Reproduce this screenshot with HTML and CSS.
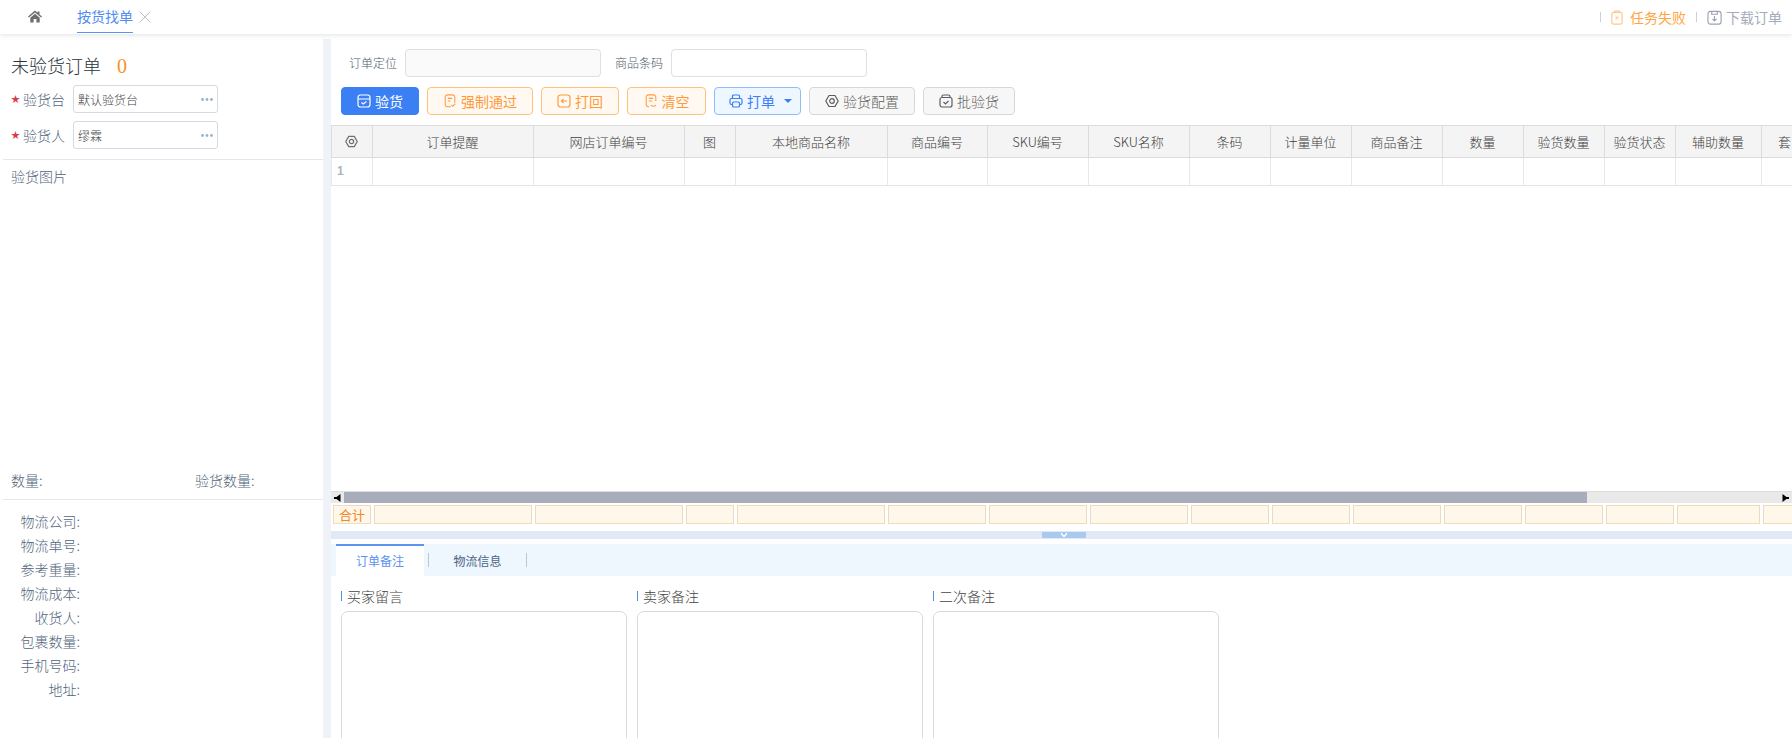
FILE: index.html
```html
<!DOCTYPE html>
<html lang="zh-CN">
<head>
<meta charset="utf-8">
<title>按货找单</title>
<link rel="stylesheet" href="styles.css">
</head>
<body>
<header class="topbar">
  <div class="home"><svg class="home-icon" viewBox="0 0 14 13"><path d="M7 .5 0 6.500l.9 1L7 2.400l6.100 5.100.9-1L11.500 4.400V1.400H9.600v1.400z"/><path d="M2.300 7.700 7 3.800l4.700 3.900v4.800H8.400V9H5.600v3.500H2.300z"/></svg></div>
  <div class="tab-open">
    <span class="tab-title">按货找单</span>
    <svg class="tab-close" viewBox="0 0 12 12"><path d="M.5.5l11 11M11.500.5l-11 11"/></svg>
  </div>
  <div class="top-actions">
    <i class="top-sep"></i>
    <span class="top-action warn">
      <svg class="ic" viewBox="0 0 14 16"><rect x="1.500" y="2.500" width="11" height="12.500" rx="2"/><path d="M4.500 2.500V1h5v1.500M5.500 7l3 3M8.500 7l-3 3"/></svg>
      任务失败
    </span>
    <i class="top-sep"></i>
    <span class="top-action muted">
      <svg class="ic" viewBox="0 0 16 16"><rect x="1" y="1.500" width="14" height="13.500" rx="2.500"/><path d="M5 1.500v3h6v-3M8 6.500v5M5.800 9.500 8 11.700l2.200-2.200"/></svg>
      下载订单
    </span>
  </div>
</header>

<main class="main">
  <aside class="left">
    <section class="left-head">
      <h1 class="left-title">未验货订单<span class="count">0</span></h1>
      <div class="pick-row">
        <span class="star">★</span><label class="pick-label">验货台</label>
        <div class="pick-box"><span>默认验货台</span><svg class="dots" viewBox="0 0 12 3"><circle cx="1.500" cy="1.500" r="1.400"/><circle cx="6" cy="1.500" r="1.400"/><circle cx="10.500" cy="1.500" r="1.400"/></svg></div>
      </div>
      <div class="pick-row">
        <span class="star">★</span><label class="pick-label">验货人</label>
        <div class="pick-box"><span>缪霖</span><svg class="dots" viewBox="0 0 12 3"><circle cx="1.500" cy="1.500" r="1.400"/><circle cx="6" cy="1.500" r="1.400"/><circle cx="10.500" cy="1.500" r="1.400"/></svg></div>
      </div>
    </section>
    <section class="left-pic">
      <div class="pic-title">验货图片</div>
      <div class="stats">
        <span class="stat-a">数量:</span>
        <span>验货数量:</span>
      </div>
    </section>
    <section class="left-info">
      <div class="info-row">物流公司:</div>
      <div class="info-row">物流单号:</div>
      <div class="info-row">参考重量:</div>
      <div class="info-row">物流成本:</div>
      <div class="info-row">收货人:</div>
      <div class="info-row">包裹数量:</div>
      <div class="info-row">手机号码:</div>
      <div class="info-row">地址:</div>
    </section>
  </aside>
  <div class="gutter"></div>
  <div class="right">
    <div class="filters">
      <label class="f-label">订单定位</label><div class="f-input disabled"></div>
      <label class="f-label second">商品条码</label><div class="f-input"></div>
    </div>
    <div class="buttons">
      <button class="btn primary w78"><svg class="ic" viewBox="0 0 14 14"><rect x="1" y="1" width="12" height="12" rx="2.500"/><path d="M1 5h12M4.500 8.500l1.700 1.500 3.300-2.500"/></svg>验货</button>
      <button class="btn orange w106"><svg class="ic" viewBox="0 0 14 16"><path d="M8 14.500H4A2.500 2.500 0 0 1 1.500 12V3.500A2.500 2.500 0 0 1 4 1h6a2.500 2.500 0 0 1 2.500 2.500V10M4.500 5h5M4.500 8h3M8.500 12.500l1.500 1.500 3-3"/></svg>强制通过</button>
      <button class="btn orange w78"><svg class="ic" viewBox="0 0 14 14"><rect x="1" y="1" width="12" height="12" rx="2.500"/><path d="M10 7H4.500M6.500 5 4.500 7l2 2"/></svg>打回</button>
      <button class="btn orange w79"><svg class="ic" viewBox="0 0 14 16"><path d="M5 14.500H4A2.500 2.500 0 0 1 1.500 12V3.500A2.500 2.500 0 0 1 4 1h6a2.500 2.500 0 0 1 2.500 2.500V8M4.500 5h5M4.500 8h4M7 12.500a3 2.500 0 0 0 5.500 0"/></svg>清空</button>
      <button class="btn blue w87"><svg class="ic" viewBox="0 0 14 14"><path d="M3.500 4.500V2A1 1 0 0 1 4.500 1h5a1 1 0 0 1 1 1v2.500M3.500 10.500H2.500A1.500 1.500 0 0 1 1 9V6a1.500 1.500 0 0 1 1.500-1.500h9A1.500 1.500 0 0 1 13 6v3a1.500 1.500 0 0 1-1.500 1.500h-1"/><rect x="3.500" y="8" width="7" height="5" rx="1"/></svg>打单<i class="caret"></i></button>
      <button class="btn gray w106"><svg class="ic" viewBox="0 0 14 14"><path d="M4 1.500h6L13.200 7 10 12.500H4L.8 7z" stroke-linejoin="round"/><circle cx="7" cy="7" r="2.300"/></svg>验货配置</button>
      <button class="btn gray w92"><svg class="ic" viewBox="0 0 14 14"><path d="M3 3V2.500A1.500 1.500 0 0 1 4.500 1h5A1.500 1.500 0 0 1 11 2.500V3"/><rect x="1" y="3.500" width="12" height="9.500" rx="2"/><path d="M4.500 8l2 2 3-3"/></svg>批验货</button>
    </div>

    <div class="table">
      <div class="grid thead">
        <div class="th"><svg class="gear" viewBox="0 0 14 14"><path d="M4 1.500h6L13.200 7 10 12.500H4L.8 7z" stroke-linejoin="round"/><circle cx="7" cy="7" r="2.300"/></svg></div>
        <div class="th">订单提醒</div><div class="th">网店订单编号</div><div class="th">图</div><div class="th">本地商品名称</div><div class="th">商品编号</div><div class="th">SKU编号</div><div class="th">SKU名称</div><div class="th">条码</div><div class="th">计量单位</div><div class="th">商品备注</div><div class="th">数量</div><div class="th">验货数量</div><div class="th">验货状态</div><div class="th">辅助数量</div><div class="th clip">套</div>
      </div>
      <div class="grid tbody">
        <div class="td index">1</div>
        <div class="td"></div><div class="td"></div><div class="td"></div><div class="td"></div><div class="td"></div><div class="td"></div><div class="td"></div><div class="td"></div><div class="td"></div><div class="td"></div><div class="td"></div><div class="td"></div><div class="td"></div><div class="td"></div><div class="td"></div>
      </div>
    </div>

    <div class="scrollbar">
      <span class="arrow"><svg viewBox="0 0 7 8"><path d="M0 3h2.500L6.500 0v8L2.500 5H0z"/></svg></span>
      <span class="thumb"></span>
      <span class="track-rest"></span>
      <span class="arrow"><svg viewBox="0 0 7 8"><path d="M7 3H4.500L.5 0v8l4-3H7z"/></svg></span>
    </div>

    <div class="grid tfoot">
      <div class="fc total">合计</div>
      <div class="fc"></div><div class="fc"></div><div class="fc"></div><div class="fc"></div><div class="fc"></div><div class="fc"></div><div class="fc"></div><div class="fc"></div><div class="fc"></div><div class="fc"></div><div class="fc"></div><div class="fc"></div><div class="fc"></div><div class="fc"></div><div class="fc"></div>
    </div>

    <div class="splitter"><span class="split-handle"><svg viewBox="0 0 8 6"><path d="M1 .5 4 3.500 7 .5V2.500L4 5.500 1 2.500z"/></svg></span></div>

    <nav class="tabs">
      <span class="tab active">订单备注</span><i class="tab-sep"></i>
      <span class="tab">物流信息</span><i class="tab-sep"></i>
    </nav>

    <div class="notes">
      <div class="note"><div class="note-title">买家留言</div><div class="note-box"></div></div>
      <div class="note"><div class="note-title">卖家备注</div><div class="note-box"></div></div>
      <div class="note"><div class="note-title">二次备注</div><div class="note-box"></div></div>
    </div>
  </div>
</main>
</body>
</html>
```
FILE: styles.css
```css
* { box-sizing: border-box; }
html, body { margin: 0; padding: 0; height: 100%; overflow: hidden; background: #fff; }
body { font-family: "Noto Sans CJK SC", "Liberation Sans", sans-serif; font-size: 14px; font-weight: 300; color: #444; width: 1792px; height: 738px; }

.ic { width: 14px; height: 14px; fill: none; stroke: currentColor; stroke-width: 1.200; flex: none; }

/* top bar */
.topbar { height: 34px; display: flex; align-items: stretch; background: #fff; box-shadow: 0 1px 5px rgba(0, 0, 0, .12); position: relative; z-index: 2; }
.home { width: 77px; padding: 10px 0 0 28px; }
.home-icon { width: 14px; height: 13px; fill: #6e6e6e; display: block; }
.tab-open { display: flex; align-items: flex-start; }
.tab-title { color: #4f8bf0; font-weight: 400; line-height: 32px; height: 33px; border-bottom: 1px solid #5b93f0; }
.tab-close { width: 12px; height: 12px; margin: 11px 0 0 6px; fill: none; stroke: #bcc3cf; stroke-width: 1; }
.top-actions { margin-left: auto; display: flex; align-items: center; padding-right: 10px; }
.top-sep { width: 1px; height: 10px; background: #c9ced6; }
.top-action { display: flex; align-items: center; gap: 6px; line-height: 34px; font-weight: 400; }
.top-action .ic { width: 14px; height: 15px; }
.warn { color: #ffa640; margin: 0 10px 0 9px; }
.warn .ic { stroke: #ffc48a; }
.muted { color: #a4abbb; margin-left: 10px; gap: 4px; }
.muted .ic { stroke: #9aa2b3; width: 15px; }

/* page */
.main { display: flex; margin-top: 5px; height: 699px; }
.left { width: 323px; padding-left: 3px; display: flex; flex-direction: column; flex: none; }
.gutter { width: 8px; background: #eff3f8; flex: none; }
.right { flex: 1; min-width: 0; overflow: hidden; }

/* left panel */
.left-head { padding: 13px 0 10px 8px; border-bottom: 1px solid #e4e7eb; height: 121px; }
.left-title { margin: 0 0 5px; font-size: 18px; font-weight: 300; line-height: 27px; color: #2b323c; }
.count { color: #f7931e; margin-left: 16px; font-family: "Liberation Serif", serif; font-size: 20px; font-weight: 400; }
.pick-row { display: flex; align-items: center; height: 28px; margin-bottom: 8px; }
.star { width: 12px; color: #d8394d; font-size: 9px; line-height: 28px; }
.pick-label { width: 50px; color: #50647a; line-height: 28px; }
.pick-box { width: 145px; height: 28px; border: 1px solid #d5dae0; border-radius: 3px; display: flex; align-items: center; justify-content: space-between; padding: 0 4px; font-size: 12px; color: #444; }
.dots { width: 12px; height: 3px; fill: #9db2c2; flex: none; }
.left-pic { flex: none; height: 340px; border-bottom: 1px solid #e4e7eb; padding: 6px 8px 9px; display: flex; flex-direction: column; justify-content: space-between; color: #50647a; line-height: 20px; }
.stats { display: flex; }
.stat-a { width: 184px; }
.left-info { padding-top: 9px; }
.info-row { width: 77px; height: 24px; line-height: 24px; text-align: right; color: #50647a; }

/* filters */
.filters { display: flex; align-items: center; height: 28px; margin-top: 10px; }
.f-label { font-size: 12px; color: #4e5a68; margin-left: 18px; margin-right: 8px; line-height: 28px; }
.f-label.second { margin-left: 14px; margin-right: 8px; }
.f-input { width: 196px; height: 28px; border: 1px solid #dcdfe4; border-radius: 4px; background: #fff; }
.f-input.disabled { background: #fafafa; }

/* buttons */
.buttons { display: flex; gap: 8px; margin: 10px 0 10px 10px; }
.btn { height: 28px; display: flex; align-items: center; justify-content: center; gap: 4px; border-radius: 4px; border: 1px solid; font: inherit; font-weight: 400; padding: 0; }
.w78 { width: 78px; } .w79 { width: 79px; } .w87 { width: 87px; } .w92 { width: 92px; } .w106 { width: 106px; }
.primary { background: #3b7ff5; border-color: #3b7ff5; color: #fff; }
.orange { background: #fff9f1; border-color: #ffc27d; color: #ff9a3c; }
.blue { background: #eef6ff; border-color: #90bdf9; color: #3b7ff5; padding-left: 6px; }
.gray { background: #f7f7f7; border-color: #d8d8d8; color: #5d5d5d; font-weight: 300; }
.caret { width: 0; height: 0; border: 4px solid transparent; border-top: 4px solid #3b7ff5; border-bottom: 0; margin-left: 5px; }

/* table */
.grid { display: grid; grid-template-columns: 41px 161px 151px 51px 152px 100px 101px 101px 81px 81px 91px 81px 81px 71px 86px 100px; width: 1540px; }
.table { height: 366px; border-top: 1px solid #dcdcdc; overflow: hidden; }
.thead { height: 32px; background: #f4f4f4; border-bottom: 1px solid #dcdcdc; }
.th { font-size: 13px; line-height: 30px; text-align: center; color: #3f3f3f; border-left: 1px solid #dcdcdc; padding-right: 1px; white-space: nowrap; display: flex; align-items: center; justify-content: center; }
.th.clip { justify-content: flex-start; padding-left: 16px; }
.gear { width: 13px; height: 13px; fill: none; stroke: #707070; stroke-width: 1.300; }
.tbody { height: 28px; border-bottom: 1px solid #e4e4e4; }
.td { border-left: 1px solid #e8e8e8; }
.td.index { font-family: "Liberation Sans", sans-serif; font-size: 12px; font-weight: 700; color: #aab4bd; line-height: 27px; padding-left: 5px; }

.scrollbar { display: flex; height: 12px; background: #e9e9e9; align-items: stretch; border-top: 1px solid #dcdcdc; }
.arrow { width: 13px; flex: none; display: flex; align-items: center; justify-content: center; }
.arrow svg { width: 7px; height: 8px; fill: #000; display: block; }
.thumb { width: 1243px; background: #a7adba; }
.track-rest { flex: 1; }

.tfoot { margin-top: 2px; height: 19px; grid-template-columns: 41px 161px 151px 51px 151px 101px 101px 101px 81px 81px 91px 81px 81px 71px 86px 100px; }
.fc { margin: 0 1px 0 2px; border: 1px solid #ecdcbc; background: #fff7ea; }
.fc.total { color: #f5861f; font-size: 13px; font-weight: 400; line-height: 17px; text-align: center; }

.splitter { height: 8px; margin-top: 7px; background: #e0e9f5; display: flex; justify-content: center; padding: 1px 0 1px 5px; }
.split-handle { width: 44px; height: 6px; background: #a9c9ef; display: flex; justify-content: center; }
.split-handle svg { width: 8px; height: 6px; fill: #fff; display: block; }

.tabs { margin-top: 5px; height: 32px; background: #eef6fe; display: flex; align-items: center; padding-left: 5px; }
.tab { width: 88px; height: 32px; text-align: center; font-size: 12px; font-weight: 400; line-height: 33px; color: #4d6586; }
.tab.active { background: #fff; border-top: 2px solid #5b93f0; color: #5b93f0; line-height: 30px; }
.tab-sep { width: 1px; height: 14px; background: #b6c7dc; margin: 0 4px; }
.tab-sep + .tab { width: 89px; }

.notes { display: flex; padding: 10px 0 0 10px; gap: 10px; }
.note { width: 286px; }
.note-title { font-size: 14px; line-height: 20px; color: #444; display: flex; align-items: center; gap: 5px; }
.note-title::before { content: ""; width: 1px; height: 10px; background: #4a90e8; flex: none; }
.note-box { height: 220px; margin-top: 5px; border: 1px solid #d9d9d9; border-radius: 7px; }
```
